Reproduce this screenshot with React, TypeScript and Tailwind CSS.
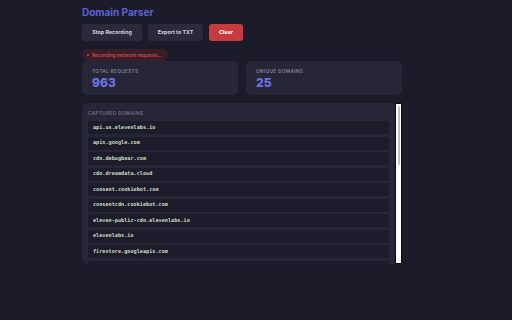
const domains = [
  'api.us.elevenlabs.io',
  'apis.google.com',
  'cdn.debugbear.com',
  'cdn.dreamdata.cloud',
  'consent.cookiebot.com',
  'consentcdn.cookiebot.com',
  'eleven-public-cdn.elevenlabs.io',
  'elevenlabs.io',
  'firestore.googleapis.com',
  'fonts.googleapis.com',
]

function StatCard({ label, value }: { label: string; value: string }) {
  return (
    <div className="flex-1 rounded-[5px] bg-[#262637] px-[10px] pt-[7px] pb-[6px]">
      <div className="text-[4.8px] leading-[6px] font-semibold uppercase tracking-[0.3px] text-[#80808f]">{label}</div>
      <div className="mt-[3px] text-[12px] leading-[12px] font-extrabold text-[#6a74e6]">{value}</div>
    </div>
  )
}

export default function App() {
  return (
    <div className="min-h-[320px] w-[512px] bg-[#1b1b29] pl-[82px] pt-[6px] font-['Inter','Liberation_Sans',sans-serif]">
      <div className="w-[320px]">
        {/* Header */}
        <h1 className="text-[10px] leading-[12px] font-bold text-[#5b62d6]">Domain Parser</h1>

        {/* Actions */}
        <div className="mt-[6px] flex gap-[6px]">
          <button className="h-[17px] w-[60px] rounded-[3px] bg-[#2a2a3b] text-[5.3px] font-bold text-[#d2d2da]">
            Stop Recording
          </button>
          <button className="h-[17px] w-[55px] rounded-[3px] bg-[#2a2a3b] text-[5.3px] font-bold text-[#d2d2da]">
            Export to TXT
          </button>
          <button className="h-[17px] w-[34px] rounded-[3px] bg-[#c53b3e] text-[5.3px] font-bold text-white">
            Clear
          </button>
        </div>

        {/* Status */}
        <div className="mt-[8px] flex h-[12px] w-fit items-center gap-[3px] rounded-full bg-[#3b1d28] pl-[5px] pr-[6px]">
          <span className="h-[2px] w-[2px] rounded-full bg-[#d04a4a]" />
          <span className="text-[4.8px] leading-[6px] font-semibold text-[#cf4a4a]">Recording network requests...</span>
        </div>

        {/* Stats */}
        <div className="flex gap-[8px]">
          <StatCard label="Total Requests" value="963" />
          <StatCard label="Unique Domains" value="25" />
        </div>

        {/* Domain list */}
        <div className="mt-[8px] flex h-[161px]">
          <div className="flex-1 overflow-hidden rounded-l-[5px] bg-[#262637] pl-[6px] pr-[6px] pt-[7px]">
            <div className="text-[4.8px] leading-[6px] font-semibold uppercase tracking-[0.3px] text-[#6f6f80]">
              Captured Domains
            </div>
            <div className="mt-[5px] flex flex-col gap-[2.5px]">
              {domains.map((d) => (
                <div
                  key={d}
                  className="flex h-[13px] shrink-0 items-center rounded-[2px] bg-[#1c1c2b] px-[5px] font-['DejaVu_Sans_Mono',monospace] text-[5.2px] font-bold text-[#cddcc4]"
                >
                  {d}
                </div>
              ))}
            </div>
          </div>
          {/* scrollbar */}
          <div className="w-[7px] border border-[#0b0b12] bg-white p-[1.5px]">
            <div className="h-[59px] rounded-[2px] bg-[#c1c1c1]" />
          </div>
        </div>
      </div>
    </div>
  )
}
